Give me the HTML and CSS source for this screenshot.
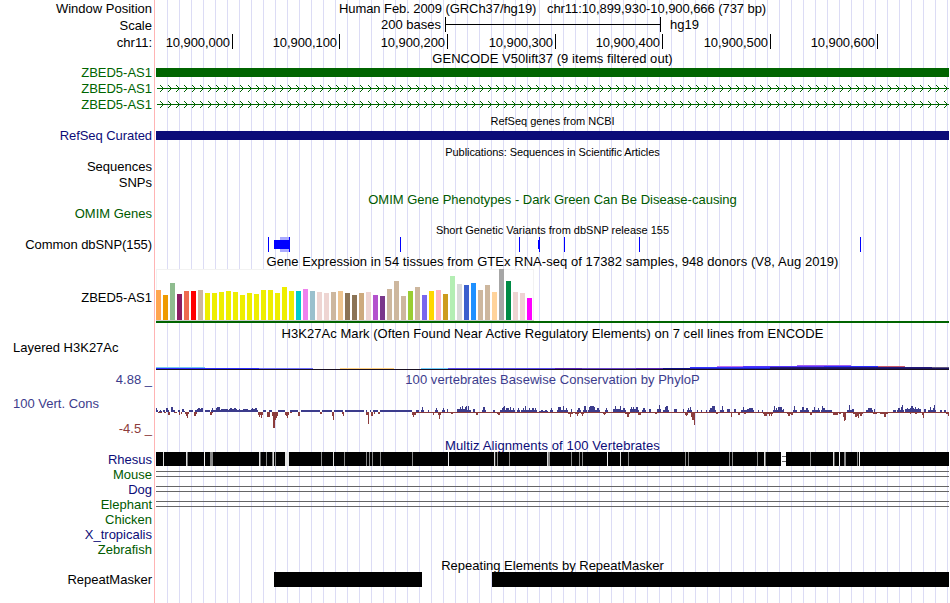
FILE: index.html
```html
<!DOCTYPE html>
<html lang="en">
<head>
<meta charset="UTF-8">
<title>Human hg19 chr11:10,899,930-10,900,666</title>
<link rel="stylesheet" href="styles.css">
</head>
<body>
<div class="browser">
    <div class="row h16"><div class="label low">Window Position</div><div class="data title low narrow">Human Feb. 2009 (GRCh37/hg19)   chr11:10,899,930-10,900,666 (737 bp)</div></div>
    <div class="row h18">
        <div class="label low">Scale</div>
        <div class="data scale">
            <span class="bases">200 bases</span>
            <svg width="216" height="18"><path d="M0 1h1v7h214v-7h1v15h-1v-7h-214v7h-1z"/></svg>
            <span class="db">hg19</span>
        </div>
    </div>
    <div class="row h17">
        <div class="label">chr11:</div>
        <div class="data ruler">
            <span>10,900,000</span><span>10,900,100</span><span>10,900,200</span><span>10,900,300</span><span>10,900,400</span><span>10,900,500</span><span>10,900,600</span>
        </div>
    </div>

    <div class="row h14"><div class="label"></div><div class="data title low wide">GENCODE V50lift37 (9 items filtered out)</div></div>
    <div class="row h16 green"><div class="label">ZBED5-AS1</div><div class="data"><svg viewBox="156 65 793 16"><path d="M156 68h793v9h-793z"/></svg></div></div>
    <div class="row h16 green"><div class="label">ZBED5-AS1</div><div class="data"><svg class="intron" viewBox="156 81 793 16"></svg></div></div>
    <div class="row h16 green"><div class="label">ZBED5-AS1</div><div class="data"><svg class="intron" viewBox="156 81 793 16"></svg></div></div>

    <div class="row h16"><div class="label"></div><div class="data title small">RefSeq genes from NCBI</div></div>
    <div class="row h14 navy"><div class="label narrow">RefSeq Curated</div><div class="data"><svg viewBox="156 129 793 14"><path d="M156 131h793v9h-793z"/></svg></div></div>

    <div class="row h16"><div class="label"></div><div class="data title small low narrow">Publications: Sequences in Scientific Articles</div></div>
    <div class="row h16"><div class="label">Sequences</div><div class="data"></div></div>
    <div class="row h16"><div class="label">SNPs</div><div class="data"></div></div>

    <div class="row h16 omim"><div class="label"></div><div class="data title low">OMIM Gene Phenotypes - Dark Green Can Be Disease-causing</div></div>
    <div class="row h14 omim"><div class="label">OMIM Genes</div><div class="data"></div></div>

    <div class="row h16"><div class="label"></div><div class="data title small low">Short Genetic Variants from dbSNP release 155</div></div>
    <div class="row h15">
        <div class="label narrow">Common dbSNP(155)</div>
        <div class="data">
            <svg viewBox="156 237 793 15">
                <path fill="#aaf" d="M280 237h9v15h-9z"/>
                <path fill="#00f" d="M268 237h1v15h-1zM274 240h15v9h-15zM289 237h1v15h-1zM400 237h1v15h-1zM519 237h1v15h-1zM538 240h1v9h-1zM539 237h1v15h-1zM564 237h1v15h-1zM639 237h1v15h-1zM860 237h1v15h-1z"/>
            </svg>
        </div>
    </div>

    <div class="row h17"><div class="label"></div><div class="data title low wide">Gene Expression in 54 tissues from GTEx RNA-seq of 17382 samples, 948 donors (V8, Aug 2019)</div></div>
    <div class="row h57">
        <div class="label">ZBED5-AS1</div>
        <div class="data">
            <svg viewBox="156 269 793 57">
                <path fill="#f2f2f2" d="M156 269h378v52h-378z"/>
                <path fill="#fff" d="M157 270h376v50h-376z"/>
                <path fill="#ccc" d="M156 320h378v1h-378z"/>
                <g id="gtex"></g>
                <path fill="#006400" d="M156 321h793v2h-793z"/>
            </svg>
        </div>
    </div>

    <div class="row h15"><div class="label"></div><div class="data title wide">H3K27Ac Mark (Often Found Near Active Regulatory Elements) on 7 cell lines from ENCODE</div></div>
    <div class="row h31">
        <div class="label left">Layered H3K27Ac</div>
        <div class="data"><svg id="h3k" viewBox="156 341 793 31"></svg></div>
    </div>

    <div class="row h15 phylo"><div class="label">4.88 _</div><div class="data title wide">100 vertebrates Basewise Conservation by PhyloP</div></div>
    <div class="row h50 phylo">
        <div class="label range"><span class="name">100 Vert. Cons</span><span class="min">-4.5 _</span></div>
        <div class="data"><svg viewBox="156 387 793 50"><path id="down" fill="#8c3c3c"/><path id="up" fill="#3c3c8c"/></svg></div>
    </div>

    <div class="row h15 navy"><div class="label"></div><div class="data title low wider">Multiz Alignments of 100 Vertebrates</div></div>
    <div class="row h15 navy"><div class="label">Rhesus</div><div class="data"><svg id="rhesus" viewBox="156 452 793 15"></svg></div></div>
    <div class="row h15 omim"><div class="label">Mouse</div><div class="data"><div class="gap"></div></div></div>
    <div class="row h15 navy"><div class="label">Dog</div><div class="data"><div class="gap"></div></div></div>
    <div class="row h15 omim"><div class="label">Elephant</div><div class="data"><div class="gap"></div></div></div>
    <div class="row h15 omim"><div class="label">Chicken</div><div class="data"></div></div>
    <div class="row h15 navy"><div class="label">X_tropicalis</div><div class="data"></div></div>
    <div class="row h15 omim"><div class="label">Zebrafish</div><div class="data"></div></div>

    <div class="row h15"><div class="label"></div><div class="data title low">Repeating Elements by RepeatMasker</div></div>
    <div class="row h15"><div class="label">RepeatMasker</div><div class="data"><svg viewBox="156 572 793 15"><path d="M274 572h148v15h-148zM492 572h457v15h-457z"/></svg></div></div>
</div>
<script src="tracks.js"></script>
</body>
</html>
```
FILE: styles.css
```css
body {
    margin: 0;
    background: #fff;
    color: #000;
    font-family: "Liberation Sans", Arial, Helvetica, sans-serif;
    font-size: 13px;
}
.browser {
    box-sizing: border-box;
    width: 949px;
    height: 603px;
    overflow: hidden;
    /* pink divider, then a guideline every 12px */
    background:
        linear-gradient(#ffb4b4, #ffb4b4) 154px 0 / 1px 100% no-repeat,
        repeating-linear-gradient(to right, transparent 0 11px, #dcdcf5 11px 12px) 156px 0 / 793px 100% no-repeat;
}
.row {
    display: flex;
}
.label {
    flex: none;
    width: 152px;
    margin-right: 4px;
    text-align: right;
    white-space: nowrap;
}
.data {
    width: 793px;
    height: 100%;
}
.title {
    text-align: center;
    white-space: pre;
}
.small {
    font-size: 11px;
}
.low {
    box-sizing: border-box;
    padding-top: 1px;
}
.narrow { letter-spacing: -0.07px; }
.wide { letter-spacing: 0.05px; }
.wider { letter-spacing: 0.11px; }

.h14 { height: 14px; line-height: 14px; }
.h15 { height: 15px; line-height: 15px; }
.h16 { height: 16px; line-height: 16px; }
.h17 { height: 17px; line-height: 17px; }
.h18 { height: 18px; line-height: 18px; }
.h31 { height: 31px; line-height: 14px; }
.h50 { height: 50px; line-height: 16px; }
.h57 { height: 57px; line-height: 57px; }

.green { color: #006400; }
.navy { color: #0c0c78; }
.omim { color: #005a00; }
.phylo { color: #3c3c8c; }

svg {
    display: block;
    fill: currentColor;
    shape-rendering: crispEdges;
}
.data > svg {
    width: 793px;
    height: 100%;
}

.data.scale {
    display: flex;
}
.scale .bases {
    width: 285px;
    margin-right: 4px;
    text-align: right;
}
.scale > svg {
    width: 216px;
    margin-right: 9px;
}

.ruler {
    display: grid;
    grid-template-columns: 77px 107px 108px 108px 107px 108px 107px;
}
.ruler span {
    height: 15px;
    border-right: 1px solid #000;
    padding-right: 2px;
    text-align: right;
    letter-spacing: -0.07px;
}

.left {
    width: 139px;
    padding-left: 13px;
    text-align: left;
}
.range {
    display: flex;
    flex-direction: column;
    justify-content: space-between;
    box-sizing: border-box;
    padding-top: 9px;
}
.range .name {
    padding-left: 13px;
    text-align: left;
}
.range .min {
    color: #8c3c3c;
}

.gap {
    height: 4px;
    margin-top: 4px;
    border: solid #666;
    border-width: 1px 0;
}
```
FILE: tracks.js
```js
function rect(x, y, w, h, color) {
    return '<rect x="' + x + '" y="' + y + '" width="' + w + '" height="' + h + '" fill="' + color + '"/>';
}

// introns: thin line with strand arrows every 8px
var arrows = 'M157 88h792v1h-792z';
for (var ax = 160; ax < 948; ax += 8) {
    for (var k = 0; k < 3; k++) {
        arrows += 'M' + (ax + k) + ' ' + (85 + k) + 'h1v1h-1zM' + (ax + k) + ' ' + (91 - k) + 'h1v1h-1z';
    }
}
document.querySelectorAll('.intron').forEach(function (svg) {
    svg.innerHTML = '<path d="' + arrows + '"/>';
});

// GTEx: color, height
var tissues = [
    ['#ffa54f', 30], ['#ee9a00', 25], ['#8fbc8f', 37], ['#8b1c62', 26], ['#ee6a50', 29], ['#ff0000', 29],
    ['#cdb79e', 30], ['#eeee00', 27], ['#eeee00', 27], ['#eeee00', 28], ['#eeee00', 29], ['#eeee00', 28],
    ['#eeee00', 25], ['#eeee00', 27], ['#eeee00', 26], ['#eeee00', 30], ['#eeee00', 30], ['#eeee00', 27],
    ['#eeee00', 33], ['#eeee00', 29], ['#00cdcd', 29], ['#ee82ee', 31], ['#9ac0cd', 29], ['#eed5d2', 28],
    ['#eed5d2', 27], ['#cdb79e', 28], ['#eec591', 29], ['#8b7355', 27], ['#8b7355', 25], ['#cdaa7d', 27],
    ['#eed5d2', 28], ['#b452cd', 25], ['#7a378b', 24], ['#cdb79e', 31], ['#cdb79e', 39], ['#cdb79e', 24],
    ['#9acd32', 29], ['#cdb79e', 33], ['#7a67ee', 25], ['#ffd700', 29], ['#ffb6c1', 30], ['#cd9b1d', 26],
    ['#b4eeb4', 44], ['#d9d9d9', 36], ['#3a5fcd', 35], ['#1e90ff', 37], ['#cdb79e', 30], ['#cdb79e', 35],
    ['#ffd39b', 28], ['#a6a6a6', 51], ['#008b45', 39], ['#eed5d2', 28], ['#eed5d2', 27], ['#ff00ff', 22]
];
document.getElementById('gtex').innerHTML = tissues.map(function (t, i) {
    return rect(156 + i * 7, 320 - t[1], 5, t[1], t[0]);
}).join('');

// H3K27Ac: from, to, y, color
var marks = [
    [156, 949, 369, '#1a1020'],
    [156, 205, 367, '#74c8f0'], [156, 259, 368, '#2c2cff'], [259, 313, 368, '#6e6eff'],
    [340, 394, 368, '#ffd080'], [421, 448, 368, '#70d0ff'], [448, 555, 368, '#5a4af0'],
    [555, 582, 368, '#5522bb'], [582, 636, 368, '#6a44cc'], [636, 663, 368, '#5522bb'],
    [663, 690, 368, '#10108c'], [690, 770, 368, '#2020c0'], [770, 949, 368, '#1c1460'],
    [690, 770, 367, '#3333ff'], [770, 932, 367, '#241878'], [932, 949, 367, '#605880'],
    [717, 743, 366, '#c070e8'], [743, 824, 366, '#5533ff'], [824, 878, 366, '#2828ff'],
    [878, 905, 366, '#c85868'], [797, 851, 365, '#a060f0']
];
document.getElementById('h3k').innerHTML = marks.map(function (m) {
    return rect(m[0], m[2], m[1] - m[0], 1, m[3]);
}).join('');

// PhyloP scores as x,width,height
var up = '156,1,4 157,1,2 159,3,1 160,1,2 163,2,2 166,2,4 168,1,2 171,2,5 173,2,2 178,2,2 182,2,3 184,1,1 189,4,2 195,8,2 197,1,3 198,2,4 200,2,3 201,2,4 205,5,2 211,4,2 212,1,4 215,43,2 216,1,4 217,3,5 221,7,3 229,8,3 230,2,4 234,2,4 239,1,3 243,5,3 251,6,3 252,1,4 255,2,4 ' +
    '263,3,2 269,3,2 278,7,2 290,8,2 301,19,2 322,10,2 334,9,2 345,19,2 366,1,2 370,1,2 373,5,2 380,32,2 416,3,2 ' +
    '422,1,5 428,1,2 436,1,4 443,1,4 447,1,3 457,8,3 458,1,3 460,1,5 462,1,6 465,1,5 466,1,6 468,1,6 469,2,2 473,2,3 483,2,5 493,2,2 500,14,2 502,1,4 503,1,5 504,1,6 506,3,4 510,1,5 513,1,4 518,1,4 521,15,2 523,1,4 525,1,6 529,1,4 532,2,4 535,1,4 539,9,1 541,2,2 545,2,2 551,1,4 ' +
    '558,3,5 563,1,6 566,1,4 571,1,3 578,2,4 584,2,6 589,6,5 590,4,6 597,2,4 606,1,4 613,8,3 615,1,6 620,1,6 623,2,4 630,8,3 631,1,5 633,1,5 636,2,5 643,2,4 649,2,3 657,4,3 659,1,7 663,6,2 665,1,5 666,2,6 674,3,3 683,1,3 688,1,4 690,1,5 ' +
    '697,1,2 701,1,2 706,1,2 709,7,2 710,3,4 712,3,6 720,3,2 722,1,6 727,3,3 734,2,3 741,6,2 743,1,5 747,6,3 749,4,4 758,1,2 762,1,2 773,11,2 774,1,6 776,1,4 778,4,5 783,1,3 793,4,2 794,1,6 800,9,2 802,2,5 806,2,4 812,6,2 814,1,5 818,1,4 821,11,2 822,1,6 823,2,4 847,5,2 849,1,7 852,2,3 866,7,2 868,4,4 874,1,3 893,3,2 898,2,4 901,2,5 902,1,7 905,5,3 907,1,4 910,4,4 911,2,6 914,7,3 915,1,5 918,1,4 924,2,3 928,5,2 930,1,5 933,1,4 934,1,7 940,2,2 944,2,2';
var down = '158,4,1 164,2,1 168,2,3 174,3,1 179,1,3 181,1,2 185,4,2 186,2,4 187,1,6 194,2,4 196,1,2 210,2,3 212,1,1 258,5,3 259,1,5 261,1,6 267,3,5 272,6,4 273,2,16 275,1,8 276,1,6 285,4,3 286,2,4 287,1,6 290,2,1 298,2,4 299,1,3 320,2,2 332,2,4 333,1,8 342,2,2 343,1,4 366,2,3 368,1,12 371,2,4 374,1,2 378,2,2 412,4,3 413,1,5 415,534,1 ' +
    '433,1,3 438,3,3 439,1,7 451,2,2 476,2,3 497,3,2 498,2,3 568,5,2 570,1,5 575,4,2 577,1,4 581,3,2 582,1,4 603,3,2 604,1,3 625,5,2 627,2,5 638,3,3 655,2,2 685,3,3 686,1,4 ' +
    '691,4,5 692,2,8 694,1,13 716,2,2 731,1,5 738,2,3 744,2,2 763,10,2 764,3,4 769,1,4 771,1,4 787,6,2 788,2,4 791,2,3 810,2,3 833,5,3 839,2,2 843,3,5 844,1,9 845,1,8 853,10,2 855,2,5 857,2,4 858,1,6 860,2,4 873,4,2 880,8,2 884,2,5 910,1,2 915,2,2 922,2,3 923,1,6 946,2,2 948,1,4';

function bar(x, w, h) {
    return 'M' + x + ' 412h' + w + 'v' + h + 'h-' + w + 'z';
}
function bars(list, sign) {
    return list.split(' ').map(function (s) {
        var v = s.split(',').map(Number);
        var d = bar(v[0], v[1], sign * v[2]);
        // tall positive peaks get a low step on both sides
        if (sign < 0 && v[0] > 415 && v[2] > 3) {
            d += bar(v[0] - 1, v[1] + 2, -2);
        }
        return d;
    }).join('');
}
document.getElementById('up').setAttribute('d', bars(up, -1));
document.getElementById('down').setAttribute('d', bars(down, 1));

// Rhesus: alignment with mismatches (x, width, color)
var gaps = [
    [163, 1, '#ddd'], [186, 1, '#ddd'], [187, 1, '#777'], [204, 1, '#eee'], [210, 3, '#888'], [259, 1, '#ddd'],
    [260, 1, '#666'], [266, 1, '#888'], [272, 1, '#888'], [273, 1, '#ddd'], [275, 1, '#888'], [285, 4, '#e5e5e5'],
    [321, 1, '#888'], [333, 1, '#ddd'], [344, 1, '#888'], [366, 1, '#888'], [369, 1, '#888'], [372, 1, '#888'],
    [380, 1, '#888'], [412, 1, '#888'], [448, 1, '#eee'], [494, 1, '#ddd'], [495, 1, '#333'], [497, 1, '#888'],
    [509, 1, '#888'], [547, 1, '#ddd'], [548, 2, '#888'], [571, 1, '#888'], [579, 1, '#888'], [582, 1, '#888'],
    [607, 1, '#eee'], [620, 1, '#ddd'], [628, 1, '#888'], [685, 1, '#888'], [688, 1, '#888'], [729, 1, '#888'],
    [732, 1, '#888'], [757, 1, '#888'], [764, 1, '#ddd'], [765, 1, '#777'], [781, 5, '#fff'], [810, 1, '#888'],
    [833, 1, '#ddd'], [834, 1, '#555'], [839, 1, '#eee'], [844, 2, '#888'], [857, 1, '#888'], [859, 1, '#eee']
];
document.getElementById('rhesus').innerHTML = rect(156, 452, 793, 14, '#000') + gaps.map(function (g) {
    return rect(g[0], 452, g[1], 14, g[2]);
}).join('') + rect(782, 456, 4, 1, '#666') + rect(782, 461, 4, 1, '#666');
```
